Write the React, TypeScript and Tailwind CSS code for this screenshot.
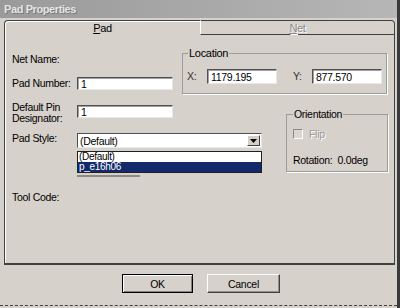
import React from "react";

const font = "font-['Liberation_Sans',Arial,sans-serif]";

function Sunken({ w, h, children }: { w: string; h: string; children?: React.ReactNode }) {
  return (
    <div
      className={`${w} ${h} bg-white border-t border-l border-[#505050] border-r border-b border-r-[#e8e8e8] border-b-[#e8e8e8] shadow-[inset_1px_1px_0_#a0a0a0] flex items-center pl-[3px] text-[10.5px] leading-[12px] text-black overflow-hidden`}
    >
      {children}
    </div>
  );
}

export default function App() {
  return (
    <div
      className={`${font} w-[400px] h-[308px] bg-[#d7d1cb] overflow-hidden flex flex-col border-r-[3px] border-[#3a3a3a] text-[10.5px] tracking-[-0.3px] text-black`}
    >
      {/* Title bar */}
      <div className="h-[18px] bg-gradient-to-r from-[#9a9a9a] via-[#a8a8a8] to-[#b6b6b6] flex items-center pl-[4px]">
        <span className="text-[11px] font-bold text-[#e4e4e4] tracking-[-0.4px] [text-shadow:1px_1px_0_#7a7a7a]">
          Pad Properties
        </span>
      </div>

      {/* Tabs */}
      <div className="mt-[2px] ml-[4px] flex h-[15px]">
        <div className="w-[196px] h-[15px] border-t border-l border-[#404040] rounded-tl-[4px] shadow-[inset_1px_1px_0_#fff] flex items-center justify-center">
          <span className="text-[11px] leading-[12px]">
            <span className="underline">P</span>ad
          </span>
        </div>
        <div className="w-[195px] h-[15px] border-t border-r border-b border-[#404040] border-l border-l-[#fff] rounded-tr-[4px] flex items-center justify-center">
          <span className="text-[11px] leading-[12px] text-[#8a8a8a] [text-shadow:1px_1px_0_#fff]">
            <span className="underline">N</span>et
          </span>
        </div>
      </div>

      {/* Tab page */}
      <div className="ml-[4px] w-[391px] h-[230px] border-l border-r border-b-2 border-[#404040] shadow-[inset_1px_0_0_#fff] flex flex-col">
        {/* Row 1 */}
        <div className="mt-[18px] flex h-[41px]">
          <div className="w-[177px] pl-[7px] flex flex-col">
            <div className="leading-[13px]">Net Name:</div>
            <div className="mt-[11px] flex items-center">
              <div className="w-[65px] leading-[13px]">Pad Number:</div>
              <Sunken w="w-[96px]" h="h-[13px]">1</Sunken>
            </div>
          </div>
          <div className="relative w-[205px] h-[41px] border border-[#9c9c9c] shadow-[1px_1px_0_#fff] pl-[4px] pt-[15px]">
            <span className="absolute -top-[7px] left-[5px] px-[1px] bg-[#d7d1cb] leading-[12px] text-[11px]">Location</span>
            <div className="flex items-center">
              <span className="w-[20px] leading-[13px] text-[#333]">X:</span>
              <Sunken w="w-[70px]" h="h-[15px]">1179.195</Sunken>
              <span className="ml-[16px] w-[19px] leading-[13px] text-[#333]">Y:</span>
              <Sunken w="w-[70px]" h="h-[15px]">877.570</Sunken>
            </div>
          </div>
        </div>

        {/* Row 2 */}
        <div className="flex">
          <div className="w-[281px] pl-[7px] flex flex-col">
            <div className="mt-[8px] flex items-start h-[22px]">
              <div className="w-[65px] leading-[11px]">
                Default Pin
                <br />
                Designator:
              </div>
              <div className="mt-[3px]">
                <Sunken w="w-[96px]" h="h-[13px]">1</Sunken>
              </div>
            </div>
            <div className="mt-[9px] flex items-start h-[15px]">
              <div className="w-[65px] leading-[11px]">Pad Style:</div>
              <div className="w-[185px] h-[15px] bg-white border-t border-l border-[#505050] border-r border-b border-r-[#e8e8e8] border-b-[#e8e8e8] flex items-center">
                <span className="flex-1 pl-[2px] leading-[12px]">(Default)</span>
                <div className="w-[13px] h-[11px] mr-[1px] bg-[#d4d0c8] border-t border-l border-[#fff] border-r border-b border-r-[#404040] border-b-[#404040] flex items-center justify-center">
                  <svg width="7" height="4" viewBox="0 0 7 4">
                    <path d="M0 0h7L3.5 4z" fill="#000" />
                  </svg>
                </div>
              </div>
            </div>
            <div className="mt-[3px] ml-[65px] w-[185px] h-[22px] border border-[#202020] bg-white flex flex-col">
              <div className="h-[10px] leading-[10px] pl-[1px] text-[10px] overflow-hidden">(Default)</div>
              <div className="h-[10px] leading-[10px] pl-[1px] text-[10px] bg-[#13296b] text-white overflow-hidden">p_e16h06</div>
            </div>
            <div className="mt-[2px] ml-[65px] w-[63px] h-[2px] bg-[#8a8a8a]" />
            <div className="mt-[14px] leading-[13px]">Tool Code:</div>
          </div>
          <div className="relative mt-[20px] w-[102px] h-[58px] border border-[#9c9c9c] shadow-[1px_1px_0_#fff] pl-[6px] pt-[14px]">
            <span className="absolute -top-[7px] left-[6px] px-[1px] bg-[#d7d1cb] leading-[12px]">Orientation</span>
            <div className="flex items-center h-[10px]">
              <div className="w-[10px] h-[10px] border-t border-l border-[#8a8a8a] border-r border-b border-r-[#fff] border-b-[#fff] bg-[#dcd6d0]" />
              <span className="ml-[6px] leading-[12px] text-[#9a9a9a] [text-shadow:1px_1px_0_#fff]">Flip</span>
            </div>
            <div className="mt-[15px] leading-[12px]">Rotation:&nbsp; 0.0deg</div>
          </div>
        </div>
      </div>

      {/* Buttons */}
      <div className="mt-[9px] pl-[122px] flex gap-[14px]">
        <div className="w-[71px] h-[19px] border border-black shadow-[inset_1px_1px_0_#fff,inset_-1px_-1px_0_#808080] flex items-center justify-center leading-[12px]">
          OK
        </div>
        <div className="w-[73px] h-[19px] border-t border-l border-[#fff] border-r border-b border-r-[#404040] border-b-[#404040] shadow-[inset_-1px_-1px_0_#909090] flex items-center justify-center leading-[12px]">
          Cancel
        </div>
      </div>

      <div className="mt-[12px] w-full border-t border-dashed border-[#404040]" />
    </div>
  );
}
